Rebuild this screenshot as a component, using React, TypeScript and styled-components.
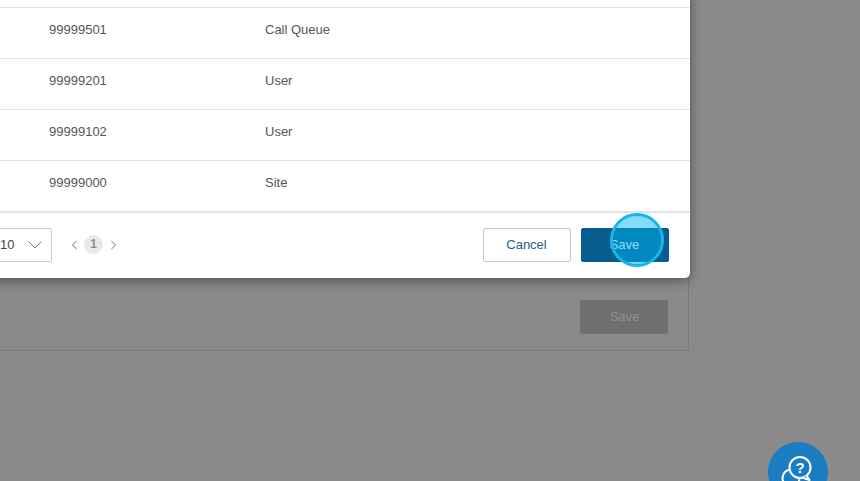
import { createGlobalStyle, styled } from "styled-components";

const Global = createGlobalStyle`
  html, body {
    margin: 0;
    padding: 0;
    height: 100%;
    overflow: hidden;
    background: #8a8a8a;
    font-family: "Helvetica Neue", "Liberation Sans", Arial, sans-serif;
  }
`;

const Page = styled.div`
  position: relative;
  width: 860px;
  height: 481px;
  overflow: hidden;
  background: #8a8a8a;
`;

const BackPanel = styled.div`
  box-sizing: border-box;
  width: 689px;
  height: 351px;
  padding-top: 300px;
  padding-right: 20px;
  display: flex;
  justify-content: flex-end;
  border-right: 1px solid #7b7b7b;
  border-bottom: 1px solid #7b7b7b;
  border-bottom-right-radius: 3px;
`;

const GhostSave = styled.div`
  width: 88px;
  height: 34px;
  padding-left: 1px;
  box-sizing: border-box;
  border-radius: 2px;
  background: #6f6f6f;
  color: #8f8f8f;
  font-size: 13px;
  line-height: 33px;
  text-align: center;
`;

const Modal = styled.div`
  position: absolute;
  left: -10px;
  top: -10px;
  box-sizing: border-box;
  width: 700px;
  height: 288px;
  background: #fff;
  border-bottom-right-radius: 5px;
  box-shadow: 0 2px 12px rgba(0, 0, 0, 0.45);
  display: flex;
  flex-direction: column;
`;

const TopGap = styled.div`
  height: 17px;
  border-bottom: 1px solid #e3e3e3;
`;

const Row = styled.div`
  height: 42px;
  padding-bottom: 8px;
  border-bottom: 1px solid #e3e3e3;
  display: grid;
  grid-template-columns: 59px 216px 1fr;
  align-items: center;
  font-size: 13px;
  color: #555;
`;

const Footer = styled.div`
  flex: 1;
  border-top: 1px solid #e3e3e3;
  display: flex;
  align-items: center;
  padding: 0 21px 2px 0;
`;

const PageSize = styled.div`
  box-sizing: border-box;
  margin-left: -10px;
  width: 72px;
  height: 34px;
  border: 1px solid #c9c9c9;
  border-radius: 2px;
  display: flex;
  align-items: center;
  justify-content: space-between;
  padding: 0 9px 0 19px;
  font-size: 13px;
  color: #444;
`;

const Pager = styled.div`
  display: flex;
  align-items: center;
  gap: 6px;
  margin-left: 19px;
  flex: 1;
`;

const PageNum = styled.span`
  width: 19px;
  height: 19px;
  margin-right: 1px;
  border-radius: 50%;
  background: #e9e9e9;
  color: #8c8c8c;
  font-size: 12px;
  font-weight: 700;
  line-height: 19px;
  text-align: center;
`;

const Button = styled.button<{ $primary?: boolean }>`
  box-sizing: border-box;
  width: 88px;
  height: 34px;
  margin-left: 10px;
  border-radius: 2px;
  border: 1px solid ${(p) => (p.$primary ? "#075d8e" : "#c3c7ca")};
  background: ${(p) => (p.$primary ? "#075d8e" : "#fff")};
  color: ${(p) => (p.$primary ? "#fff" : "#23618d")};
  font-family: inherit;
  font-size: 13px;
  padding: 0 1px 0 0;
`;

const Spot = styled.div`
  position: absolute;
  left: 610px;
  top: 213px;
  box-sizing: border-box;
  width: 54px;
  height: 54px;
  border-radius: 50%;
  border: 3px solid #17b5ea;
  background: rgba(0, 182, 245, 0.48);
`;

const Help = styled.div`
  position: absolute;
  left: 768px;
  top: 442px;
  width: 60px;
  height: 60px;
  border-radius: 50%;
  background: #1a7cc1;
  display: flex;
  justify-content: center;
  padding-top: 12px;
  box-sizing: border-box;
`;

const rows = [
  ["99999501", "Call Queue"],
  ["99999201", "User"],
  ["99999102", "User"],
  ["99999000", "Site"],
];

export default function App() {
  return (
    <Page>
      <Global />
      <BackPanel>
        <GhostSave>Save</GhostSave>
      </BackPanel>
      <Modal>
        <TopGap />
        {rows.map(([num, type]) => (
          <Row key={num}>
            <span />
            <span>{num}</span>
            <span>{type}</span>
          </Row>
        ))}
        <Footer>
          <PageSize>
            10
            <svg width="14" height="8" viewBox="0 0 14 8" fill="none" stroke="#777" strokeWidth="1">
              <path d="M.5.5L7 7 13.5.5" />
            </svg>
          </PageSize>
          <Pager>
            <svg width="7" height="10" viewBox="0 0 7 10" fill="none" stroke="#aaa" strokeWidth="1.2">
              <path d="M5.5 1L1.5 5l4 4" />
            </svg>
            <PageNum>1</PageNum>
            <svg width="7" height="10" viewBox="0 0 7 10" fill="none" stroke="#aaa" strokeWidth="1.2">
              <path d="M1.5 1l4 4-4 4" />
            </svg>
          </Pager>
          <Button>Cancel</Button>
          <Button $primary>Save</Button>
        </Footer>
      </Modal>
      <Spot />
      <Help>
        <svg width="38" height="38" viewBox="0 0 38 38" fill="none" stroke="#fff" strokeWidth="2">
          <circle cx="12" cy="24" r="8.5" />
          <circle cx="21" cy="13.5" r="10.5" fill="#1a7cc1" />
          <path d="M27.5 21.5l3 4.5-6-2" fill="#1a7cc1" strokeLinejoin="round" />
          <text x="21" y="18.5" fill="#fff" stroke="none" fontSize="15" fontWeight="700" textAnchor="middle" fontFamily="Liberation Sans">?</text>
        </svg>
      </Help>
    </Page>
  );
}
